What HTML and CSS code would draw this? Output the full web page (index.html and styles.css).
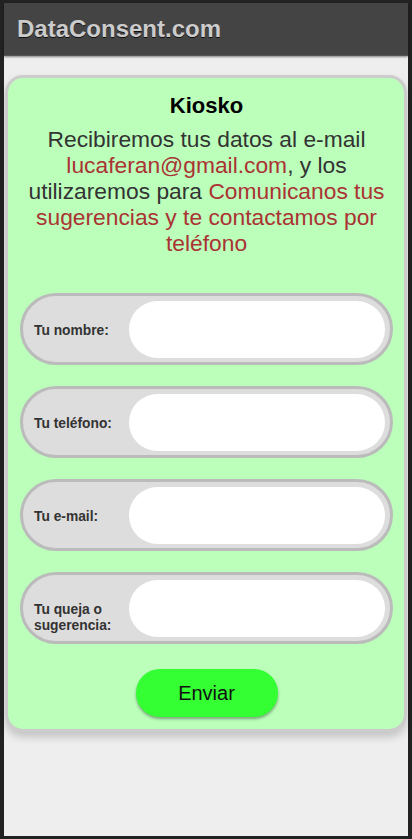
FILE: index.html
```html
<!DOCTYPE html>
<html lang="es">
<head>
<meta charset="utf-8">
<title>DataConsent.com</title>
<link rel="stylesheet" href="styles.css">
</head>
<body>
<div class="frame">
  <header class="topbar">DataConsent.com</header>
  <main class="content">
    <section class="card">
      <h1 class="title">Kiosko</h1>
      <p class="intro">Recibiremos tus datos al e-mail <span class="hl">lucaferan@gmail.com</span>, y los utilizaremos para <span class="hl">Comunicanos tus sugerencias y te contactamos por teléfono</span></p>
      <form class="form">
        <label class="field"><span class="label">Tu nombre:</span><input class="input" type="text"></label>
        <label class="field"><span class="label">Tu teléfono:</span><input class="input" type="text"></label>
        <label class="field"><span class="label">Tu e-mail:</span><input class="input" type="text"></label>
        <label class="field"><span class="label">Tu queja o sugerencia:</span><input class="input" type="text"></label>
        <div class="actions"><button class="btn" type="button">Enviar</button></div>
      </form>
    </section>
  </main>
</div>
</body>
</html>
```

FILE: styles.css
```css
html, body {
  margin: 0;
  padding: 0;
  background: #222;
}
body {
  font-family: "Liberation Sans", Arial, sans-serif;
}
.frame {
  margin: 3px 4px;
  height: 833px;
  background: #eee;
  display: flex;
  flex-direction: column;
}
.topbar {
  height: 52px;
  background: #444;
  color: #ccc;
  font-size: 24px;
  font-weight: bold;
  line-height: 52px;
  padding-left: 13px;
  text-shadow: 0 1px 0 #111;
  box-shadow: 0 1px 2px rgba(0,0,0,0.45);
  border-bottom: 1px solid #555;
  position: relative;
  z-index: 1;
}
.content {
  padding: 19px 1px 0 1px;
}
.card {
  background: #bbffbb;
  border: 3px solid #ccc;
  border-radius: 18px;
  box-shadow: 0 5px 8px rgba(0,0,0,0.18);
  padding: 15px 11px 12px 12px;
  text-align: center;
}
.title {
  margin: 0;
  font-size: 22px;
  line-height: 26px;
  font-weight: bold;
  color: #000;
}
.intro {
  margin: 7px 4px 0;
  font-size: 22.8px;
  line-height: 26px;
  color: #333;
}
.hl {
  color: #aa3333;
}
.form {
  margin-top: 37px;
  display: flex;
  flex-direction: column;
  gap: 21px;
}
.field {
  display: flex;
  align-items: flex-start;
  background: #ddd;
  border: 3px solid #bbb;
  border-radius: 40px;
  height: 66px;
  box-sizing: content-box;
  text-align: left;
}
.label {
  width: 84px;
  padding: 27px 0 0 11px;
  font-size: 13.8px;
  line-height: 16px;
  font-weight: bold;
  color: #333;
  flex: 0 0 auto;
}
.input {
  margin: 5px 5px 4px auto;
  width: 256px;
  height: 57px;
  box-sizing: border-box;
  border: none;
  border-radius: 30px;
  background: #fff;
  outline: none;
  padding: 0 16px;
  font-family: inherit;
  font-size: 16px;
}
.actions {
  display: flex;
  justify-content: center;
  margin-top: 4px;
}
.btn {
  width: 142px;
  height: 48px;
  border: none;
  border-radius: 24px;
  background: #33ff33;
  color: #111;
  font-family: "Liberation Sans", Arial, sans-serif;
  font-size: 20px;
  box-shadow: 0 2px 3px rgba(0,0,0,0.35);
  cursor: pointer;
}
```
